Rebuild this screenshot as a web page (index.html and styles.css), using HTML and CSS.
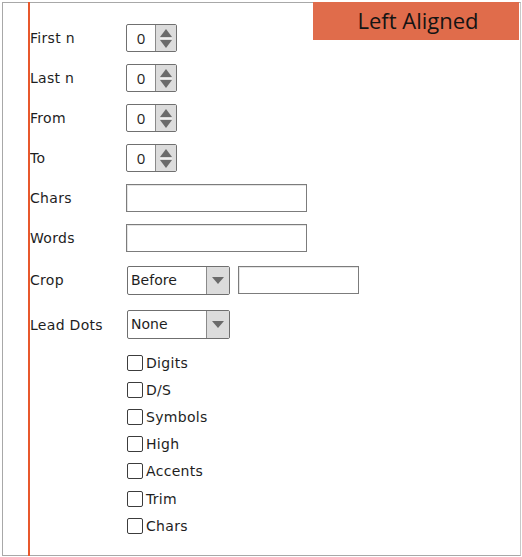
FILE: index.html
```html
<!DOCTYPE html>
<html>
<head>
<meta charset="utf-8">
<link rel="stylesheet" href="styles.css">
</head>
<body>
<div class="frame">
  <div class="tag">Left Aligned</div>
  <div class="form">
    <div class="row">
      <span class="label">First n</span>
      <div class="spin"><span class="val">0</span><span class="arrows"><i class="up"></i><i class="sep"></i><i class="down"></i></span></div>
    </div>
    <div class="row">
      <span class="label">Last n</span>
      <div class="spin"><span class="val">0</span><span class="arrows"><i class="up"></i><i class="sep"></i><i class="down"></i></span></div>
    </div>
    <div class="row">
      <span class="label">From</span>
      <div class="spin"><span class="val">0</span><span class="arrows"><i class="up"></i><i class="sep"></i><i class="down"></i></span></div>
    </div>
    <div class="row">
      <span class="label">To</span>
      <div class="spin"><span class="val">0</span><span class="arrows"><i class="up"></i><i class="sep"></i><i class="down"></i></span></div>
    </div>
    <div class="row">
      <span class="label">Chars</span>
      <div class="text wide"></div>
    </div>
    <div class="row">
      <span class="label">Words</span>
      <div class="text wide"></div>
    </div>
    <div class="row row-crop">
      <span class="label">Crop</span>
      <div class="combo"><span class="cval">Before</span><span class="cbtn"><i class="down"></i></span></div>
      <div class="text short"></div>
    </div>
    <div class="row row-lead">
      <span class="label">Lead Dots</span>
      <div class="combo"><span class="cval">None</span><span class="cbtn"><i class="down"></i></span></div>
    </div>
    <div class="checks">
      <div class="check"><span class="box"></span><span>Digits</span></div>
      <div class="check"><span class="box"></span><span>D/S</span></div>
      <div class="check"><span class="box"></span><span>Symbols</span></div>
      <div class="check"><span class="box"></span><span>High</span></div>
      <div class="check"><span class="box"></span><span>Accents</span></div>
      <div class="check"><span class="box"></span><span>Trim</span></div>
      <div class="check"><span class="box"></span><span>Chars</span></div>
    </div>
  </div>
</div>
</body>
</html>
```

FILE: styles.css
```css
html, body {
  margin: 0;
  padding: 0;
  background: #ffffff;
}
body {
  width: 522px;
  height: 557px;
  overflow: hidden;
  font-family: "DejaVu Sans", sans-serif;
  color: #1e1e1e;
}
.frame {
  position: relative;
  box-sizing: border-box;
  margin: 2px 0 0 2px;
  width: 519px;
  height: 554px;
  border: 1px solid #a8a8a8;
  border-right-color: #c8c8c8;
}
.frame::before {
  content: "";
  position: absolute;
  left: 25px;
  top: -1px;
  bottom: -1px;
  width: 2px;
  background: #e8582c;
}
.tag {
  position: absolute;
  top: -1px;
  left: 310px;
  width: 206px;
  height: 38px;
  background: #e06c4b;
  color: #141414;
  font-family: "Open Sans", sans-serif;
  font-size: 22px;
  line-height: 37px;
  text-align: center;
  text-indent: 4px;
}
.form {
  display: flex;
  flex-direction: column;
  gap: 12px;
  padding: 21px 0 0 27px;
}
.row {
  display: flex;
  align-items: center;
  height: 28px;
}
.row-crop { margin-top: 2px; }
.row-lead { margin-top: 4px; height: 29px; }
.label {
  width: 96px;
  font-size: 14px;
  letter-spacing: 0.3px;
  color: #1e1e1e;
}
.spin {
  box-sizing: border-box;
  display: flex;
  width: 51px;
  height: 28px;
  border: 1px solid #707070;
  border-radius: 2px;
  background: #fff;
}
.val {
  width: 28px;
  text-align: center;
  font-family: "Open Sans", sans-serif;
  font-size: 15px;
  line-height: 26px;
  color: #222;
}
.arrows {
  flex: 1;
  display: flex;
  flex-direction: column;
  align-items: center;
  justify-content: center;
  background: #dcdcdc;
  border-left: 1px solid #8a8a8a;
}
.up {
  width: 0;
  height: 0;
  border-left: 6px solid transparent;
  border-right: 6px solid transparent;
  border-bottom: 8px solid #6b6b6b;
}
.sep {
  width: 12px;
  height: 1px;
  margin: 1px 0;
  background: #f0f0f0;
}
.down {
  width: 0;
  height: 0;
  border-left: 6px solid transparent;
  border-right: 6px solid transparent;
  border-top: 8px solid #6b6b6b;
}
.text {
  box-sizing: border-box;
  height: 28px;
  border: 1.5px solid #7c7c7c;
  background: #fff;
  box-shadow: inset 1px 1px 0 #e4e4e4;
}
.wide { width: 181px; }
.short { width: 121px; margin-left: 8px; }
.combo {
  box-sizing: border-box;
  display: flex;
  width: 103px;
  height: 29px;
  margin-left: 1px;
  border: 1px solid #6f6f6f;
  border-radius: 2px;
  background: #fff;
}
.cval {
  flex: 1;
  padding-left: 3px;
  font-size: 14px;
  line-height: 27px;
  color: #1e1e1e;
}
.cbtn {
  width: 22px;
  display: flex;
  align-items: center;
  justify-content: center;
  background: #dcdcdc;
  border-left: 1px solid #8a8a8a;
}
.cbtn .down {
  border-left-width: 6px;
  border-right-width: 6px;
  border-top-width: 7px;
}
.checks {
  display: flex;
  flex-direction: column;
  margin-top: -2px;
  padding-left: 97px;
}
.check {
  display: flex;
  align-items: center;
  height: 27.2px;
  font-size: 14px;
  letter-spacing: 0.3px;
  color: #1e1e1e;
}
.box {
  box-sizing: border-box;
  width: 16px;
  height: 16px;
  margin-right: 3px;
  border: 1.5px solid #3c3c3c;
  border-radius: 2px;
  background: #fff;
}
```
